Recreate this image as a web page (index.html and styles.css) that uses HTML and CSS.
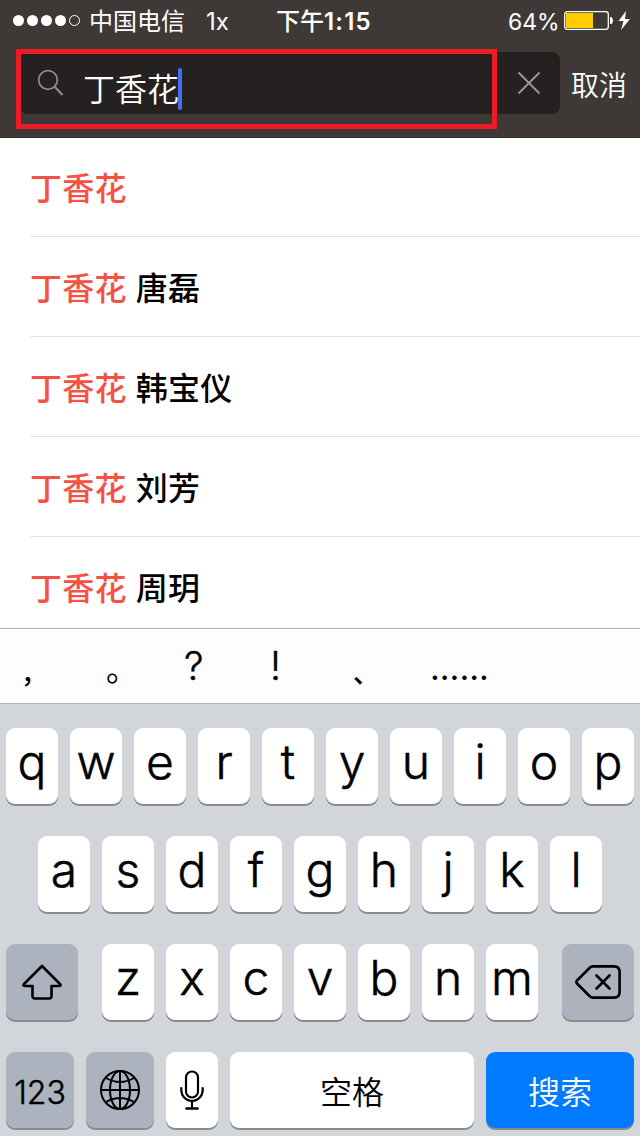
FILE: index.html
```html
<!DOCTYPE html>
<html lang="zh-CN">

<head>
  <meta charset="UTF-8" />
  <meta name="viewport" content="width=device-width, initial-scale=1.0" />
  <title>搜索</title>
  <link rel="stylesheet" href="styles.css">
</head>

<body>
  <div class="screen">
    <header class="header">
      <div class="status_bar">
        <div class="signal">
          <i></i><i></i><i></i><i></i><i class="empty"></i>
        </div>
        <span class="carrier">中国电信</span>
        <span class="network">1x</span>
        <span class="time">下午<b>1:15</b></span>
        <span class="percent">64%</span>
        <svg class="battery" width="66" height="20" viewBox="0 0 66 20">
          <rect x="0.7" y="0.7" width="43.6" height="17.6" rx="2.5" fill="none" stroke="#fff" stroke-width="1.3" />
          <rect x="2" y="2" width="27" height="15" fill="#ffcc00" />
          <path d="M46 6h1.500q1.500 1.500 1.500 3.500t-1.500 3.500h-1.500z" fill="#fff" />
          <path d="M62 0L54.500 10h5L57 19L66 8h-5z" fill="#fff" />
        </svg>
      </div>

      <div class="search_row">
        <div class="search_box">
          <svg class="search_icon" width="28" height="28" viewBox="0 0 28 28" fill="none" stroke="#8e8b90" stroke-width="1.800">
            <circle cx="11" cy="11" r="9.300" />
            <path d="M17.500 17.500L25.500 26" stroke-width="2.200" />
          </svg>
          <span class="query">丁香花</span>
          <span class="caret"></span>
          <svg class="clear_icon" width="24" height="24" viewBox="0 0 24 24" stroke="#9c99a0" stroke-width="1.800">
            <path d="M1.500 1.500L22.500 22.500M22.500 1.500L1.500 22.500" />
          </svg>
        </div>
        <span class="cancel">取消</span>
        <div class="highlight"></div>
      </div>
    </header>

    <ul class="results">
      <li><em>丁香花</em></li>
      <li><em>丁香花</em> 唐磊</li>
      <li><em>丁香花</em> 韩宝仪</li>
      <li><em>丁香花</em> 刘芳</li>
      <li><em>丁香花</em> 周玥</li>
    </ul>

    <div class="candidates">
      <span class="comma">，</span>
      <span class="stop">。</span>
      <span class="latin">?</span>
      <span class="latin">!</span>
      <span class="comma">、</span>
      <span class="dots">......</span>
    </div>

    <div class="keyboard">
      <div class="key_row">
        <div class="key">q</div>
        <div class="key">w</div>
        <div class="key">e</div>
        <div class="key">r</div>
        <div class="key">t</div>
        <div class="key">y</div>
        <div class="key">u</div>
        <div class="key">i</div>
        <div class="key">o</div>
        <div class="key">p</div>
      </div>
      <div class="key_row">
        <div class="key">a</div>
        <div class="key">s</div>
        <div class="key">d</div>
        <div class="key">f</div>
        <div class="key">g</div>
        <div class="key">h</div>
        <div class="key">j</div>
        <div class="key">k</div>
        <div class="key">l</div>
      </div>
      <div class="key_row">
        <div class="key dark shift">
          <svg width="40" height="36" viewBox="0 0 40 36" fill="none" stroke="#000" stroke-width="2.600" stroke-linejoin="round">
            <path d="M20 2L38 20Q39.500 22 37 22H29.500V32Q29.500 34.500 27 34.500H13Q10.500 34.500 10.500 32V22H3Q0.500 22 2 20Z" />
          </svg>
        </div>
        <div class="key">z</div>
        <div class="key">x</div>
        <div class="key">c</div>
        <div class="key">v</div>
        <div class="key">b</div>
        <div class="key">n</div>
        <div class="key">m</div>
        <div class="key dark delete">
          <svg width="46" height="34" viewBox="0 0 46 34" fill="none" stroke="#000" stroke-width="2.600" stroke-linecap="round" stroke-linejoin="round">
            <path d="M18 1.400H39Q44.600 1.400 44.600 7V27Q44.600 32.600 39 32.600H18Q16 32.600 14.500 31L2 18.500Q0.700 17 2 15.500L14.500 3Q16 1.400 18 1.400Z" />
            <path d="M21.500 10.500L34.500 23.500M34.500 10.500L21.500 23.500" />
          </svg>
        </div>
      </div>
      <div class="key_row">
        <div class="key dark numbers">123</div>
        <div class="key dark globe">
          <svg width="40" height="40" viewBox="0 0 40 40" fill="none" stroke="#000" stroke-width="2">
            <circle cx="20" cy="20" r="19" />
            <ellipse cx="20" cy="20" rx="10" ry="19" />
            <path d="M20 1V39M1 20H39M6 8Q20 16 34 8M6 32Q20 24 34 32" />
          </svg>
        </div>
        <div class="key">
          <svg class="mic" width="24" height="40" viewBox="0 0 24 40" fill="none" stroke="#000" stroke-width="2.200" stroke-linecap="round">
            <rect x="6" y="1.500" width="12" height="26" rx="6" />
            <path d="M1.300 18V20A10.700 11 0 0 0 22.700 20V18M12 31V38" />
            <path d="M6.500 38.500H17.500" stroke-width="2.600" />
          </svg>
        </div>
        <div class="key space">空格</div>
        <div class="key search">搜索</div>
      </div>
    </div>
  </div>
</body>

</html>
```
FILE: styles.css
```css
body {
  margin: 0;
  font-family: Inter, "Noto Sans CJK SC", sans-serif;
  color: #000;
  background-color: #fff;
}

.screen {
  width: 640px;
  height: 1136px;
  display: flex;
  flex-direction: column;
  overflow: hidden;
}

/* header */
.header {
  height: 138px;
  flex-shrink: 0;
  box-sizing: border-box;
  background-color: #3e3936;
  border-bottom: 1px solid #36312f;
  color: #fff;
}

.status_bar {
  height: 40px;
  display: flex;
  align-items: center;
  padding-left: 13px;
  font-size: 24px;
  line-height: 42px;
  white-space: nowrap;
}

.signal {
  display: flex;
  gap: 3px;
  width: 76px;
  padding-top: 1px;
}

.signal i {
  width: 11px;
  height: 11px;
  box-sizing: border-box;
  border-radius: 50%;
  background-color: #fff;
}

.signal .empty {
  background: none;
  border: 1px solid #fff;
}

.carrier {
  width: 117px;
  padding-top: 3px;
  font-size: 24px;
}

.network {
  width: 70px;
  padding-top: 3px;
  font-size: 24px;
}

.time {
  width: 232px;
  padding-top: 3px;
  font-weight: 500;
}

.time b {
  font-size: 24px;
  font-weight: 600;
  letter-spacing: 1.2px;
}

.percent {
  width: 56px;
  padding-top: 3px;
  font-size: 23px;
}

.battery {
  margin-top: 2px;
}

.search_row {
  position: relative;
  display: flex;
  align-items: center;
  margin-top: 12px;
  padding-left: 20px;
}

.search_box {
  width: 540px;
  height: 62px;
  box-sizing: border-box;
  display: flex;
  align-items: center;
  padding: 0 19px 0 17px;
  border-radius: 8px;
  background-color: #252120;
}

.query {
  margin-left: 18px;
  padding-top: 13px;
  font-size: 32px;
  font-weight: 350;
  line-height: 52px;
}

.caret {
  width: 4px;
  height: 42px;
  margin: 12px auto 0 -1px;
  border-radius: 2px;
  background-color: #436ef4;
}

.cancel {
  margin-left: 11px;
  padding-top: 1px;
  font-size: 28px;
  font-weight: 350;
}

/* red frame around the query */
.highlight {
  position: absolute;
  top: -3px;
  left: 16px;
  width: 471px;
  height: 70px;
  border: 5px solid #ed1c24;
}

/* suggestions */
.results {
  height: 490px;
  flex-shrink: 0;
  margin: 0;
  padding: 0 0 0 30px;
  list-style: none;
  font-size: 32px;
  font-weight: 500;
  letter-spacing: 0.3px;
}

.results li {
  height: 99px;
  line-height: 103px;
  border-bottom: 1px solid #e4e0e2;
}

.results li:first-child {
  height: 98px;
  line-height: 101px;
}

.results li:last-child {
  height: 91px;
  border-bottom: none;
}

.results em {
  font-style: normal;
  color: #f55246;
}

/* punctuation bar */
.candidates {
  height: 74px;
  flex-shrink: 0;
  display: grid;
  grid-template-columns: 86px 78px 82px 86px 78px 100px;
  padding-left: 20px;
  line-height: 84px;
  font-size: 34px;
  border-top: 1px solid #aeb4c1;
  border-bottom: 1px solid #aeb4c1;
  background-color: #fdfdfd;
}

.candidates .comma {
  padding-left: 1px;
  font-size: 26px;
  font-weight: 500;
  line-height: 89px;
}

.candidates .stop {
  font-size: 32px;
  line-height: 82px;
}

.candidates .latin {
  font-size: 39px;
  font-weight: 300;
  line-height: 74px;
  -webkit-text-stroke: 0.4px #000;
}

.candidates .latin + .latin {
  padding-left: 4px;
}

.candidates .dots {
  font-size: 34px;
  line-height: 78px;
}

/* keyboard */
.keyboard {
  flex: 1;
  padding: 24px 6px 0;
  background-color: #d2d5da;
}

.key_row {
  display: flex;
  justify-content: center;
  gap: 12px;
  margin-bottom: 32px;
}

.key {
  width: 52px;
  height: 76px;
  display: flex;
  justify-content: center;
  align-items: center;
  border-radius: 9px;
  background-color: #fff;
  box-shadow: 0 2px 0 #898b8f;
  font-size: 48px;
  font-weight: 300;
  line-height: 70px;
  -webkit-text-stroke: 0.5px #000;
  /* optical centering of lowercase letters */
  padding-bottom: 8px;
  box-sizing: border-box;
}

.dark {
  background-color: #acb3be;
  padding-bottom: 0;
}

.shift {
  width: 72px;
  margin-right: 12px;
}

.delete {
  width: 72px;
  margin-left: 12px;
}

.numbers {
  width: 68px;
  padding-top: 5px;
  font-size: 32px;
}

.globe {
  width: 68px;
}

.space,
.search {
  width: 244px;
  padding: 6px 0 0;
  font-size: 32px;
  font-weight: 350;
  -webkit-text-stroke: 0;
}

.search {
  width: 148px;
  color: #fff;
  background-color: #007aff;
}

.mic {
  margin-top: 8px;
}
```
